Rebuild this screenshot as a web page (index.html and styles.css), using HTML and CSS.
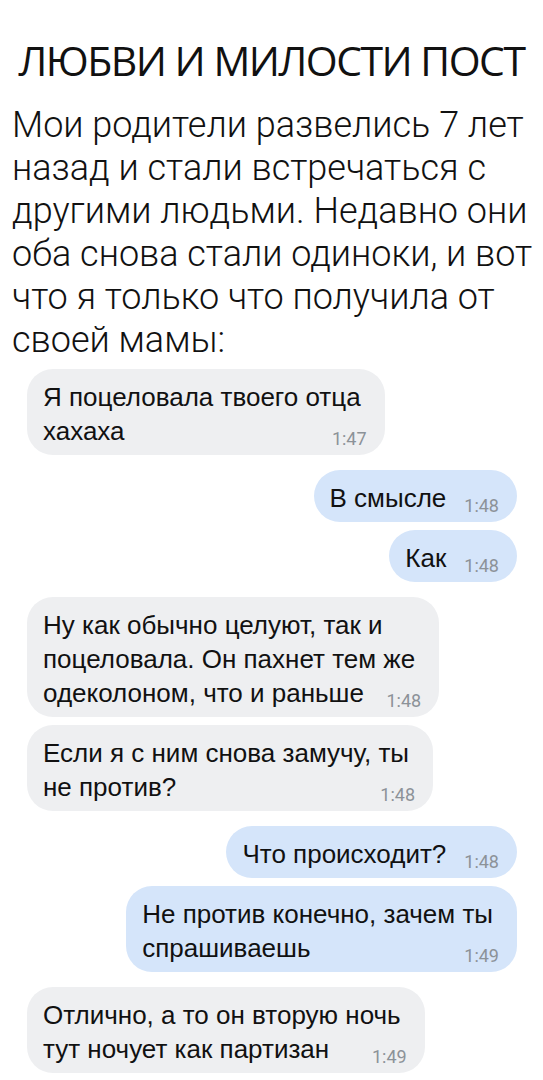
FILE: index.html
```html
<!DOCTYPE html>
<html lang="ru">
<head>
  <meta charset="UTF-8" />
  <meta name="viewport" content="width=device-width, initial-scale=1" />
  <title>Любви и милости пост</title>
  <link rel="stylesheet" href="styles.css">
</head>
<body>

  <div class="pagina">
    <h1 class="titulo">ЛЮБВИ И МИЛОСТИ ПОСТ</h1>
    <p class="relato">
      Мои родители развелись 7 лет<br>
      назад и стали встречаться с<br>
      другими людьми. Недавно они<br>
      оба снова стали одиноки, и вот<br>
      что я только что получила от<br>
      своей мамы:
    </p>

    <!-- Переписка -->
    <div class="chat">
      <div class="burbuja entra">Я поцеловала твоего отца<br>хахаха<span class="hora">1:47</span></div>
      <div class="burbuja sale otro">В смысле<span class="hora">1:48</span></div>
      <div class="burbuja sale">Как<span class="hora">1:48</span></div>
      <div class="burbuja entra otro">Ну как обычно целуют, так и<br>поцеловала. Он пахнет тем же<br>одеколоном, что и раньше<span class="hora">1:48</span></div>
      <div class="burbuja entra">Если я с ним снова замучу, ты<br>не против?<span class="hora">1:48</span></div>
      <div class="burbuja sale otro">Что происходит?<span class="hora">1:48</span></div>
      <div class="burbuja sale">Не против конечно, зачем ты<br>спрашиваешь<span class="hora">1:49</span></div>
      <div class="burbuja entra otro">Отлично, а то он вторую ночь<br>тут ночует как партизан<span class="hora">1:49</span></div>
    </div>
  </div>

</body>
</html>
```

FILE: styles.css
```css
/* ---------- Colores ---------- */
:root{
  --texto:#111;
  --gris:#eeeff1;
  --azul:#d5e5fa;
  --hora:#8c9298;
}
/* ---------- Base ---------- */
*{box-sizing:border-box}
body{
  margin:0;
  background:#fff;
  color:var(--texto);
  font-family:"Liberation Sans",Arial,sans-serif;
}
.pagina{
  padding:34px 0 0;
}

/* ---------- Título ---------- */
.titulo{
  margin:0;
  text-align:center;
  font-family:"Open Sans",sans-serif;
  font-weight:400;
  font-size:41px;
  letter-spacing:-1.5px;
  line-height:52px;
  white-space:nowrap;
}

/* ---------- Texto ---------- */
.relato{
  margin:18px 0 0;
  padding-left:12px;
  font-family:Roboto,sans-serif;
  font-weight:300;
  font-size:36px;
  line-height:43px;
  white-space:nowrap;
}

/* ---------- Chat ---------- */
.chat{
  display:flex;
  flex-direction:column;
  align-items:flex-start;
  padding:7px 26px 0 27px;
}
.burbuja{
  display:inline-block;
  padding:11px 24px 7px 16px;
  border-radius:26px;
  font-size:26px;
  line-height:34px;
  white-space:nowrap;
  margin-top:8px;
}
.burbuja:first-child{margin-top:0}
.burbuja.otro{margin-top:15px}
.entra{background:var(--gris)}
.sale{
  background:var(--azul);
  align-self:flex-end;
}
.hora{
  float:right;
  margin:0 -6px 0 18px;
  padding-top:15px;
  font-family:Roboto,sans-serif;
  font-weight:400;
  font-size:18px;
  line-height:19px;
  color:var(--hora);
}
```
